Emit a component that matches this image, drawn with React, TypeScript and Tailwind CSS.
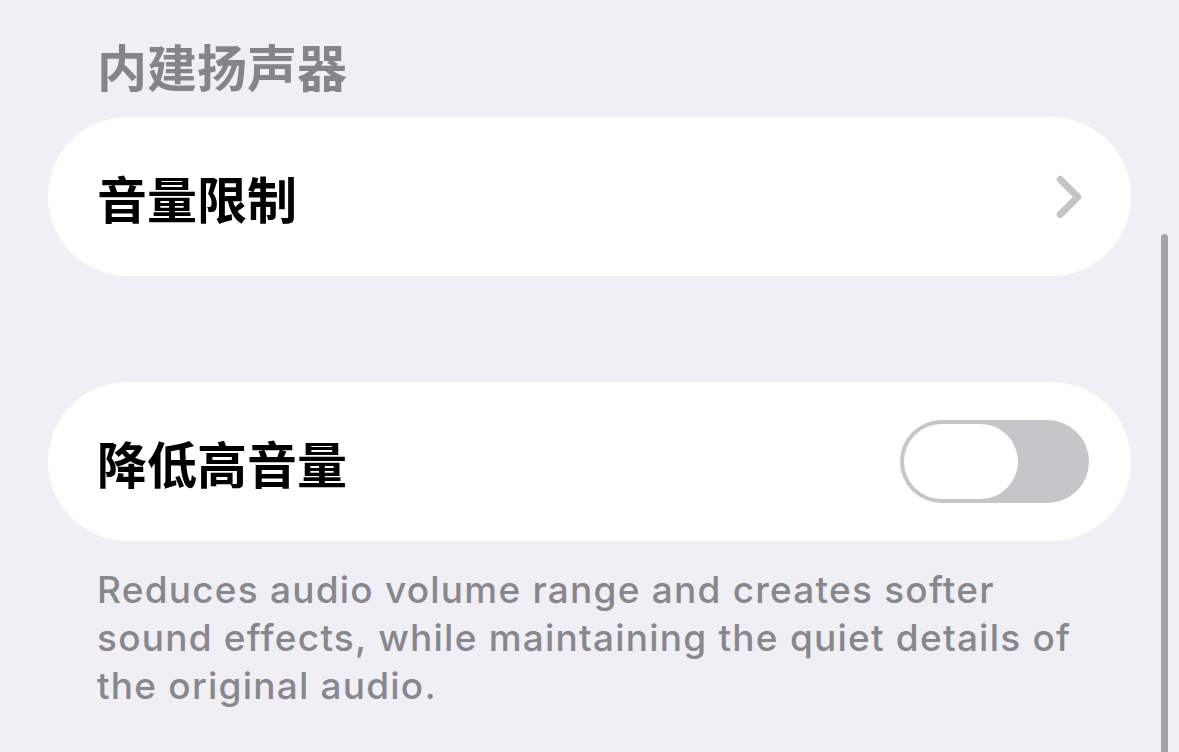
import { ChevronRight } from "lucide-react"

const cjk = "font-['Noto_Sans_CJK_SC','Noto_Sans',sans-serif]"

const Toggle = ({ on }: { on: boolean }) => (
    <div className={`w-[189px] h-[83px] rounded-full p-[4px] flex ${on ? "bg-[#34c759] justify-end" : "bg-[#c6c6c8] justify-start"}`}>
        <div className="w-[114px] h-full rounded-full bg-white" />
    </div>
)

const App = () => {
    return (
        <div className="relative w-[1179px] h-[752px] overflow-hidden bg-[#f0eff5]">
            <div className="px-[48px] pt-[32px]">
                <p className={`${cjk} pl-[49px] text-[50px] leading-[66px] font-bold text-[#858589]`}>
                    内建扬声器
                </p>
                <div className="mt-[19px] h-[159px] rounded-full bg-white pl-[49px] pr-[27px] flex items-center justify-between">
                    <p className={`${cjk} text-[50px] font-bold text-black leading-none`}>音量限制</p>
                    <ChevronRight className="text-[#c4c4c6]" size={70} strokeWidth={2.4} />
                </div>

                <div className="mt-[106px] h-[159px] rounded-full bg-white pl-[49px] pr-[42px] flex items-center justify-between">
                    <p className={`${cjk} text-[50px] font-bold text-black leading-none`}>降低高音量</p>
                    <Toggle on={false} />
                </div>

                <p className="mt-[25px] pl-[49px] pr-[46px] font-['Inter',sans-serif] text-[37px] tracking-[0.033em] leading-[48px] font-medium text-[#88878d]">
                    Reduces audio volume range and creates softer sound effects, while maintaining the quiet details of the original audio.
                </p>
            </div>

            {/* scroll indicator */}
            <div className="absolute left-[1161px] top-[234px] w-[7px] h-[540px] rounded-full bg-[#a3a3a8]" />
        </div>
    )
}

export default App
